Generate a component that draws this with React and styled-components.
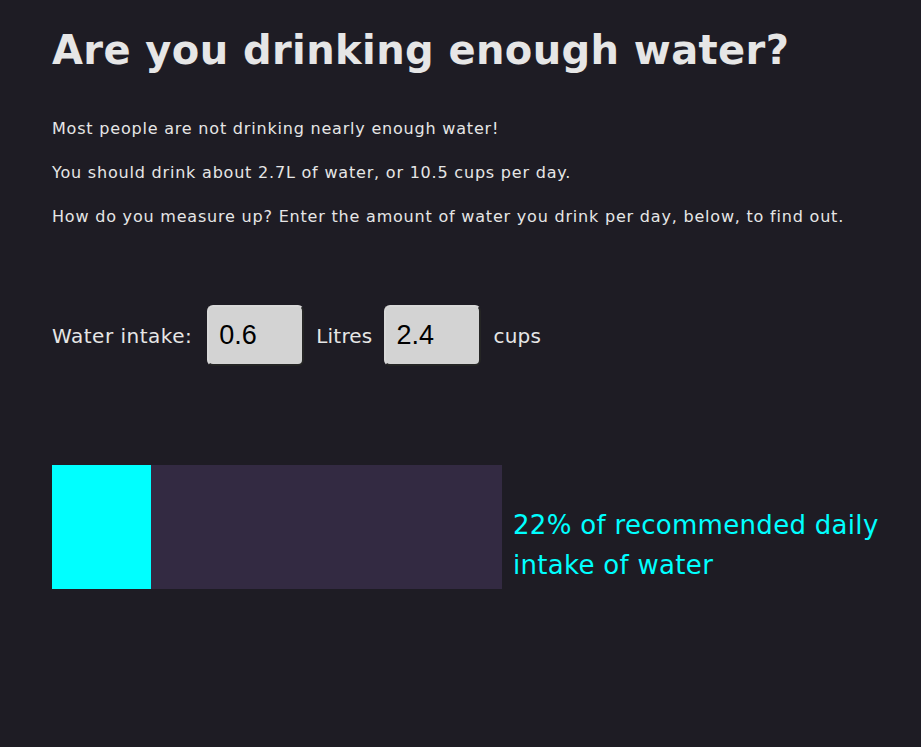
import React from "react";
import styled, { createGlobalStyle } from "styled-components";

const Global = createGlobalStyle`
  html, body { margin: 0; padding: 0; background: #1e1c24; }
  body { font-family: "DejaVu Sans", "Open Sans", sans-serif; color: #e6e6e6; }
`;

const Page = styled.main`
  padding: 22px 52px 0 52px;
  min-height: 747px;
  box-sizing: border-box;
`;

const Title = styled.h1`
  margin: 0 0 39px 0;
  font-size: 40px;
  font-weight: 700;
  line-height: 56px;
  color: #e6e6e6;
  letter-spacing: 0.4px;
`;

const Para = styled.p`
  margin: 0 0 20px 0;
  font-size: 16px;
  line-height: 24px;
  letter-spacing: 0.8px;
`;

const IntakeRow = styled.div`
  display: flex;
  align-items: center;
  gap: 12px;
  margin-top: 76px;
  font-size: 20px;
  letter-spacing: 0.5px;
`;

const Label = styled.span`
  margin-right: 3px;
`;

const Unit = styled.span`
  letter-spacing: 0.2px;
`;

const Field = styled.input`
  width: 97px;
  height: 61px;
  box-sizing: border-box;
  background: #d3d3d3;
  border: 2px outset #7a7a7a;
  border-top-color: #d8d8d8;
  border-left-color: #d8d8d8;
  border-radius: 6px;
  padding: 0 10px;
  font-family: "Liberation Sans", Arial, sans-serif;
  font-size: 27px;
  letter-spacing: 0;
  color: #000;
  outline: none;
`;

const ResultRow = styled.div`
  display: flex;
  align-items: center;
  gap: 11px;
  margin-top: 99px;
`;

const Track = styled.div`
  flex: 0 0 450px;
  height: 124px;
  background: #332a42;
  display: flex;
`;

const Fill = styled.div`
  height: 100%;
  background: #00ffff;
`;

const ResultText = styled.div`
  color: #00ffff;
  font-size: 26px;
  line-height: 40px;
  margin-top: 36px;
  white-space: nowrap;
  letter-spacing: 0.3px;
`;

export default function App() {
  const pct = 22;
  return (
    <>
      <Global />
      <Page>
        <Title>Are you drinking enough water?</Title>
        <Para>Most people are not drinking nearly enough water!</Para>
        <Para>You should drink about 2.7L of water, or 10.5 cups per day.</Para>
        <Para>
          How do you measure up? Enter the amount of water you drink per day, below, to find out.
        </Para>
        <IntakeRow>
          <Label>Water intake:</Label>
          <Field defaultValue="0.6" />
          <Unit>Litres</Unit>
          <Field defaultValue="2.4" />
          <Unit>cups</Unit>
        </IntakeRow>
        <ResultRow>
          <Track>
            <Fill style={{ width: `${pct}%` }} />
          </Track>
          <ResultText>
            22% of recommended daily
            <br />
            intake of water
          </ResultText>
        </ResultRow>
      </Page>
    </>
  );
}
